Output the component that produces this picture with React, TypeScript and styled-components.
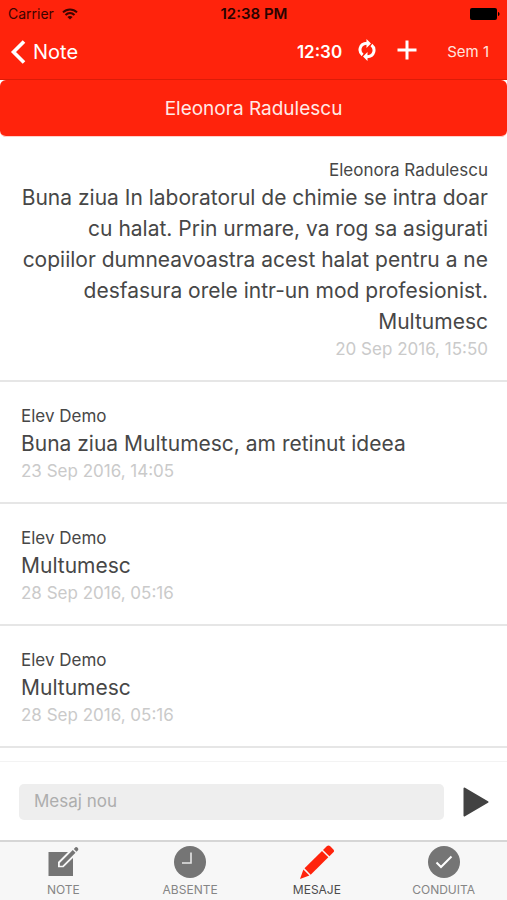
import React from "react";
import styled, { createGlobalStyle } from "styled-components";

const RED = "#ff230c";
const INK = "#474747";

const GlobalStyle = createGlobalStyle`
  *, *::before, *::after { box-sizing: border-box; }
  body {
    margin: 0;
    background: #fff;
    color: ${INK};
    font-family: Inter, "Liberation Sans", sans-serif;
  }
  button, input { font: inherit; color: inherit; }
  button { border: 0; padding: 0; background: none; cursor: pointer; }
  p, h1, h2, ul { margin: 0; padding: 0; font-weight: 400; }
  ul { list-style: none; }
  svg { display: block; flex: none; }
`;

const Screen = styled.div`
  display: flex;
  flex-direction: column;
  min-height: 100vh;
`;

const StatusBar = styled.div`
  display: grid;
  grid-template-columns: 1fr auto 1fr;
  align-items: center;
  height: 27px;
  padding: 0 7px 0 8px;
  background: ${RED};
  color: #3c0400;
  font-size: 14px;
`;

const Carrier = styled.span`
  display: flex;
  align-items: center;
  gap: 8px;
`;

const Clock = styled.span`
  color: #2a0300;
  font-size: 15px;
  font-weight: 600;
`;

const BatterySlot = styled.span`
  display: flex;
  justify-content: flex-end;
`;

const NavBar = styled.header`
  display: flex;
  align-items: center;
  justify-content: space-between;
  height: 53px;
  padding: 0 18px 3px 10px;
  border-bottom: 1px solid #dc1c08;
  background: ${RED};
  color: #fff;
`;

const BackButton = styled.button`
  display: flex;
  align-items: center;
  gap: 7px;
  font-size: 20px;
`;

const Actions = styled.div`
  display: flex;
  align-items: center;
`;

const Time = styled.span`
  font-size: 17px;
  font-weight: 600;
`;

const IconButton = styled.button<{ $gap: number }>`
  display: flex;
  margin-left: ${(p) => p.$gap}px;
  padding-bottom: 3px;
`;

const TermButton = styled.button`
  margin-left: 30px;
  font-size: 15px;
  color: #ffe3df;
`;

const Recipient = styled.button`
  flex: none;
  height: 57px;
  border-bottom: 1px solid #ffd0ca;
  border-radius: 6px;
  background: ${RED};
  color: #ffe9e6;
  font-size: 19px;
`;

const Messages = styled.ul`
  flex: 1;
`;

const Message = styled.li<{ $own?: boolean }>`
  padding: ${(p) => (p.$own ? "21px 19px 19px" : "22px 21px 19px")};
  border-bottom: 2px solid #e6e6e6;
  text-align: ${(p) => (p.$own ? "right" : "left")};
`;

const Author = styled.h2`
  font-size: 17px;
  line-height: 24px;
`;

const Body = styled.p`
  font-size: 21px;
  line-height: 31px;
`;

const Sent = styled.p`
  color: #cacaca;
  font-size: 17px;
  line-height: 24px;
`;

const Composer = styled.form`
  display: flex;
  align-items: center;
  gap: 19px;
  padding: 22px 18px 20px 19px;
  border-top: 1px solid #f3f3f3;
`;

const MessageInput = styled.input`
  flex: 1;
  min-width: 0;
  height: 36px;
  padding: 0 15px 3px;
  border: 0;
  border-radius: 5px;
  background: #eeeeee;
  font-size: 17px;
  &::placeholder { color: #adadad; opacity: 1; }
`;

const SendButton = styled.button`
  display: flex;
`;

const TabBar = styled.nav`
  display: grid;
  grid-template-columns: repeat(4, 1fr);
  height: 60px;
  border-top: 2px solid #d6d6d6;
  background: #f7f7f7;
`;

const Tab = styled.a<{ $active?: boolean }>`
  display: flex;
  flex-direction: column;
  align-items: center;
  gap: 3px;
  padding-top: 3px;
  color: ${(p) => (p.$active ? "#4c4c4c" : "#858585")};
  font-size: 12px;
  line-height: 16px;
  text-decoration: none;
`;

const Wifi = () => (
  <svg width="16" height="12" viewBox="0 0 16 12" fill="none" stroke="#3c0400" strokeWidth="2">
    <path d="M1 4.4C5 .4 11 .4 15 4.4M3.5 7C6.2 4.4 9.8 4.4 12.5 7" />
    <path d="M8 11.600 5.400 8.900C6.800 7.600 9.200 7.600 10.600 8.900Z" fill="#3c0400" stroke="none" />
  </svg>
);

const Battery = () => (
  <svg width="30" height="12" viewBox="0 0 30 12">
    <rect x="0" y="0" width="27" height="12" rx="2" />
    <path d="M28 4c2 .6 2 3.400 0 4z" />
  </svg>
);

const Chevron = () => (
  <svg width="16" height="24" viewBox="0 0 16 24" fill="none" stroke="#fff" strokeWidth="3.600">
    <path d="M14 1.500 3.500 12 14 22.500" />
  </svg>
);

const Refresh = () => (
  <svg width="18" height="22" viewBox="0 0 18 22">
    <g fill="none" stroke="#fff" strokeWidth="3">
      <path d="M4.600 16C.2 12.500 1.300 4.500 9 4.200" />
      <path d="M13.400 6C17.800 9.500 16.700 17.500 9 17.800" />
    </g>
    <path d="M8.500 0 13 4.500 8.500 9zM9.500 13 5 17.500 9.500 22z" fill="#fff" />
  </svg>
);

const Plus = () => (
  <svg width="20" height="20" viewBox="0 0 20 20" stroke="#fff" strokeWidth="3">
    <path d="M10 .5v19M.5 10h19" />
  </svg>
);

const Send = () => (
  <svg width="26" height="30" viewBox="0 0 26 30">
    <path d="M1.500 1.500 24.500 15 1.500 28.500z" fill="#424242" stroke="#424242" strokeWidth="2" strokeLinejoin="round" />
  </svg>
);

const NoteIcon = () => (
  <svg width="34" height="34" viewBox="0 0 34 34">
    <path d="M2.500 7H27V31H2.500z" fill="#757575" />
    <path d="M12 22.300V17L26.500 2.500 32 8 17.500 22.300z" fill="#f7f7f7" />
    <path d="M13.800 20.700V18L26.800 5 29.500 7.700 16.500 20.700z" fill="#757575" />
    <path d="M27.800 4 29.500 2.300C30.600 1.300 33 3.800 32.200 5L30.500 6.700z" fill="#757575" />
  </svg>
);

const ClockIcon = () => (
  <svg width="34" height="34" viewBox="0 0 34 34">
    <circle cx="17" cy="17" r="16" fill="#757575" />
    <path d="M18 7.500v10.500H9" fill="none" stroke="#e6e6e6" strokeWidth="1.600" />
  </svg>
);

const PencilIcon = () => (
  <svg width="36" height="34" viewBox="0 0 36 34" fill={RED}>
    <path d="M1 34 4.400 24.500 10.400 30.600z" />
    <path d="M5.500 23.300 23 6 29.300 12.200 11.700 29.700z" />
    <path d="M24 5 28 1.100C29 .2 30 .2 31 1.100L34.400 4.400C35.300 5.300 35.300 6.400 34.400 7.300L30.400 11.200z" />
  </svg>
);

const CheckIcon = () => (
  <svg width="34" height="34" viewBox="0 0 34 34">
    <circle cx="17" cy="17" r="16" fill="#757575" />
    <path d="M9.500 17.500 14 22 24.500 11.500" fill="none" stroke="#fff" strokeWidth="2" />
  </svg>
);

const messages = [
  {
    own: true,
    author: "Eleonora Radulescu",
    body: "Buna ziua In laboratorul de chimie se intra doar cu halat. Prin urmare, va rog sa asigurati copiilor dumneavoastra acest halat pentru a ne desfasura orele intr-un mod profesionist. Multumesc",
    sent: "20 Sep 2016, 15:50",
  },
  { own: false, author: "Elev Demo", body: "Buna ziua Multumesc, am retinut ideea", sent: "23 Sep 2016, 14:05" },
  { own: false, author: "Elev Demo", body: "Multumesc", sent: "28 Sep 2016, 05:16" },
  { own: false, author: "Elev Demo", body: "Multumesc", sent: "28 Sep 2016, 05:16" },
];

const tabs = [
  { label: "NOTE", href: "#note", Icon: NoteIcon },
  { label: "ABSENTE", href: "#absente", Icon: ClockIcon },
  { label: "MESAJE", href: "#mesaje", Icon: PencilIcon, active: true },
  { label: "CONDUITA", href: "#conduita", Icon: CheckIcon },
];

export default function App() {
  return (
    <>
      <GlobalStyle />
      <Screen>
        <StatusBar>
          <Carrier>
            Carrier <Wifi />
          </Carrier>
          <Clock>12:38 PM</Clock>
          <BatterySlot>
            <Battery />
          </BatterySlot>
        </StatusBar>
        <NavBar>
          <BackButton type="button">
            <Chevron />
            Note
          </BackButton>
          <Actions>
            <Time>12:30</Time>
            <IconButton type="button" $gap={16} aria-label="Reincarca">
              <Refresh />
            </IconButton>
            <IconButton type="button" $gap={21} aria-label="Adauga">
              <Plus />
            </IconButton>
            <TermButton type="button">Sem 1</TermButton>
          </Actions>
        </NavBar>
        <Recipient type="button">Eleonora Radulescu</Recipient>
        <Messages>
          {messages.map((m, i) => (
            <Message key={i} $own={m.own}>
              <Author>{m.author}</Author>
              <Body>{m.body}</Body>
              <Sent>{m.sent}</Sent>
            </Message>
          ))}
        </Messages>
        <Composer onSubmit={(e) => e.preventDefault()}>
          <MessageInput type="text" aria-label="Mesaj nou" placeholder="Mesaj nou" />
          <SendButton type="submit" aria-label="Trimite">
            <Send />
          </SendButton>
        </Composer>
        <TabBar>
          {tabs.map(({ label, href, Icon, active }) => (
            <Tab key={label} href={href} $active={active} aria-current={active ? "page" : undefined}>
              <Icon />
              {label}
            </Tab>
          ))}
        </TabBar>
      </Screen>
    </>
  );
}
